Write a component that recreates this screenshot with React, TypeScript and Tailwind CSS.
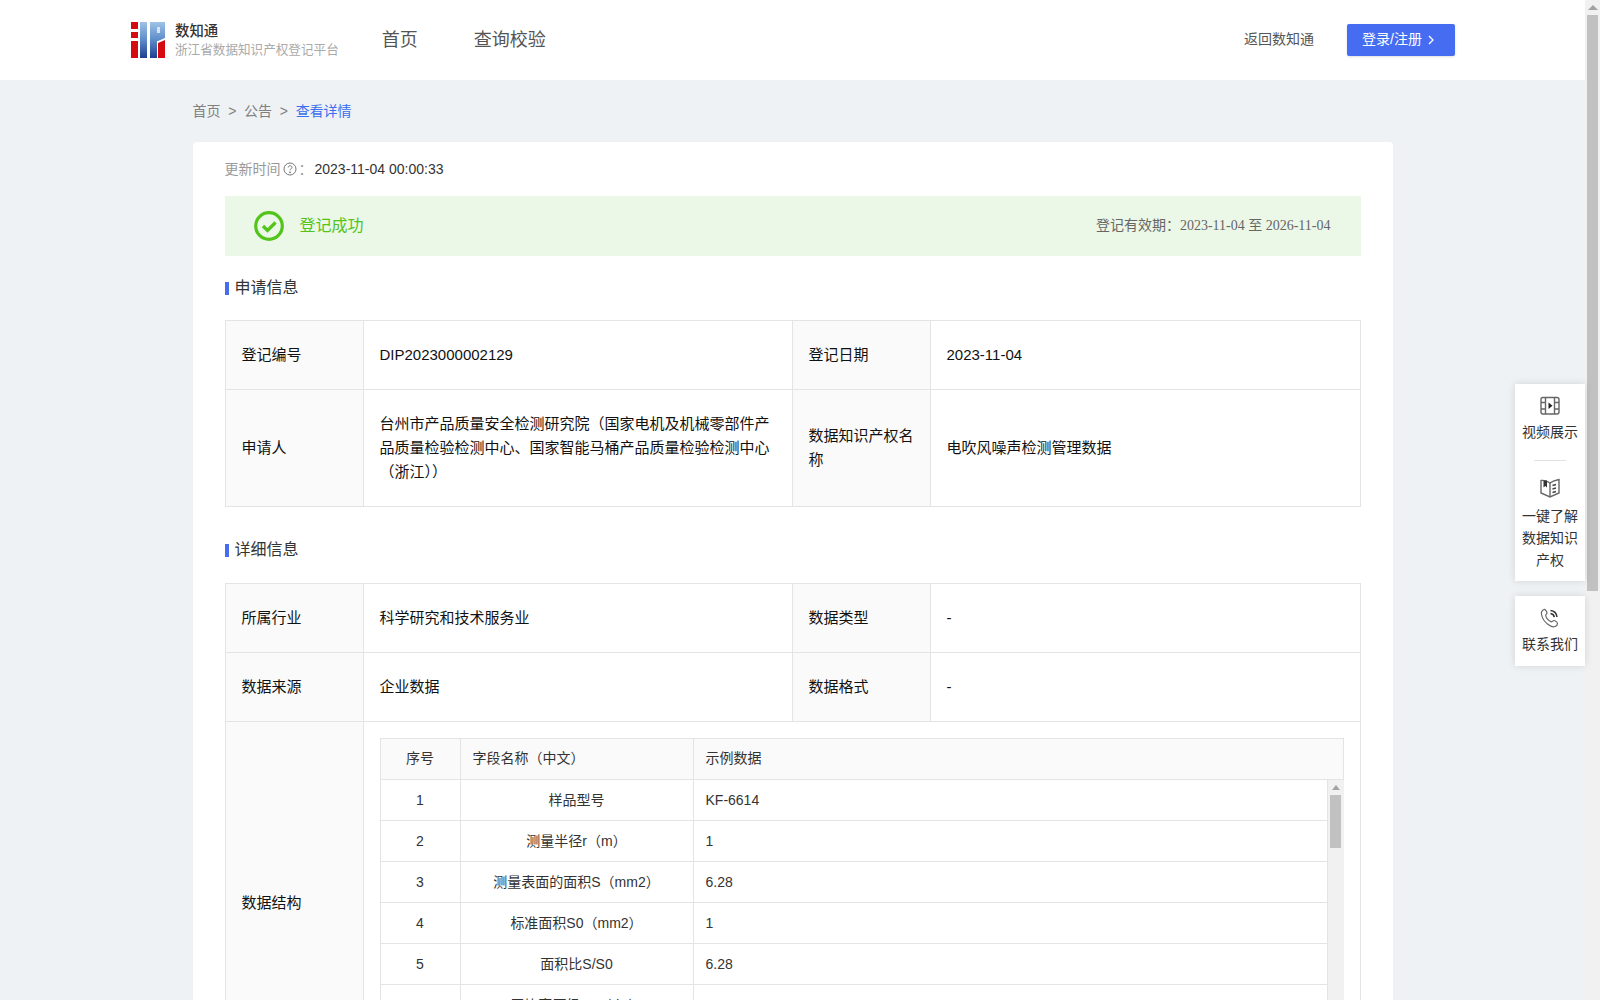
import React from 'react';

const FONT = "font-['Liberation_Sans','Noto_Sans_CJK_SC',sans-serif]";

const FIELD_ROWS = [
  { no: 1, name: '样品型号', sample: 'KF-6614' },
  { no: 2, name: '测量半径r（m）', sample: '1' },
  { no: 3, name: '测量表面的面积S（mm2）', sample: '6.28' },
  { no: 4, name: '标准面积S0（mm2）', sample: '1' },
  { no: 5, name: '面积比S/S0', sample: '6.28' },
  { no: 6, name: '平均声压级LP（dB）', sample: '46.8888' },
  { no: 7, name: '声功率级LW（dB）', sample: '54.8888' },
];

function Logo() {
  return (
    <svg width="34" height="36" viewBox="0 0 34 36" className="shrink-0">
      <defs>
        <linearGradient id="ipBlue" x1="0" y1="0" x2="0" y2="1">
          <stop offset="0" stopColor="#9fc2e8" />
          <stop offset="0.5" stopColor="#5c8cc9" />
          <stop offset="1" stopColor="#1f3f8f" />
        </linearGradient>
      </defs>
      <rect x="0" y="0" width="7" height="7" fill="#d40c12" />
      <rect x="0" y="10" width="7" height="6" fill="#d40c12" />
      <rect x="0" y="19" width="7" height="17" fill="#d40c12" />
      <rect x="9" y="0" width="7" height="36" fill="url(#ipBlue)" />
      <path d="M19 0h15v16l-7 3h-1v17h-7z" fill="url(#ipBlue)" />
      <rect x="26" y="5" width="3" height="6" fill="#d5e4f4" />
      <path d="M27 21l7-3v18h-7z" fill="#d40c12" />
    </svg>
  );
}

function VideoIcon() {
  return (
    <svg width="22" height="22" viewBox="0 0 22 22" fill="none" stroke="#666" strokeWidth="1.4">
      <rect x="2" y="2.5" width="18" height="16.5" rx="2" />
      <path d="M6.5 2.5V19M15.5 2.5V19M2 7.5h4.5M2 14h4.5M15.5 7.5H20M15.5 14H20" />
      <path d="M9.5 7.5l4 3.2-4 3.2z" fill="#222" stroke="none" />
    </svg>
  );
}

function BookIcon() {
  return (
    <svg width="22" height="22" viewBox="0 0 22 22" fill="none" stroke="#666" strokeWidth="1.4">
      <path d="M2 3.5c3-.5 6 .3 9 2.500 3-2.200 6-3 9-3.500V16l-9 4-9-4z" />
      <path d="M11 6v14" />
      <path d="M4.500 3.500h3.500v7L6.200 9l-1.700 1.500z" fill="#333" stroke="none" />
      <path d="M13.500 8.500l3.500-1M13.500 12l3.500-1M13.500 15.500l3.500-1" stroke="#444" />
    </svg>
  );
}

function PhoneIcon() {
  return (
    <svg width="22" height="22" viewBox="0 0 22 22" fill="none" stroke="#666" strokeWidth="1.2">
      <path d="M5 2.500c-2 1-3 2.500-2.500 5 .8 4 2.800 7 6 9.500 2.500 2 5.500 3.300 7.500 2.500 1.700-.7 2.500-2 2.500-3 0-1-2.500-3-3.500-3-1 0-1.500 1.500-2.500 1.300-2.500-.5-5.500-4-5.800-6.300-.1-1 1.300-1.500 1.300-2.500S6.200 2 5 2.500z" />
      <path d="M11.500 3.500c3.500.3 6 2.800 6.500 6.500M11.500 6.500c2 .2 3.500 1.700 3.800 3.700" stroke="#333" strokeWidth="1.5" />
    </svg>
  );
}

function SectionTitle({ title, className = '' }: { title: string; className?: string }) {
  return (
    <div className={`flex h-[64px] items-center ${className}`}>
      <span className="mr-[6px] h-[13px] w-[4px] bg-[#466df1]" />
      <span className="text-[16px] text-[#333]">{title}</span>
    </div>
  );
}

const labelCell = 'border border-[#e4e4e4] bg-[#fafafa] px-4 text-[15px] leading-6 text-[#111] font-normal text-left';
const valueCell = 'border border-[#e4e4e4] px-4 text-[15px] leading-6 text-[#111]';

function InfoCols() {
  return (
    <colgroup>
      <col className="w-[138px]" />
      <col className="w-[429px]" />
      <col className="w-[138px]" />
      <col />
    </colgroup>
  );
}

function FieldTable() {
  return (
    <div className="border border-[#e4e4e4] text-[14px] text-[#333]">
      <div className="grid h-[41px] grid-cols-[80px_233px_1fr] items-stretch border-b border-[#e4e4e4] bg-[#fafafa] leading-[38px]">
        <div className="border-r border-[#e4e4e4] text-center">序号</div>
        <div className="border-r border-[#e4e4e4] pl-3">字段名称（中文）</div>
        <div className="pl-3">示例数据</div>
      </div>
      <div className="flex">
        <div className="flex-1 border-r border-[#e4e4e4]">
          {FIELD_ROWS.map((row) => (
            <div key={row.no} className="grid h-[41px] grid-cols-[80px_233px_1fr] border-b border-[#e4e4e4] leading-[40px] last:border-b-0">
              <div className="border-r border-[#e4e4e4] text-center">{row.no}</div>
              <div className="border-r border-[#e4e4e4] text-center">{row.name}</div>
              <div className="pl-3">{row.sample}</div>
            </div>
          ))}
        </div>
        <div className="-mr-px w-[16px] shrink-0 bg-[#f1f1f1] pt-[5px]">
          <div className="mx-auto h-0 w-0 border-x-[4px] border-b-[5px] border-x-transparent border-b-[#a3a3a3]" />
          <div className="mx-auto mt-[5px] h-[53px] w-[11px] bg-[#c1c1c1]" />
        </div>
      </div>
    </div>
  );
}

export default function App() {
  return (
    <div className={`relative flex h-screen overflow-hidden bg-[#eef2f5] ${FONT}`}>
      <div className="min-w-0 flex-1">
        <header className="flex h-[80px] items-center bg-white pl-[131px] pr-[130px]">
          <Logo />
          <div className="ml-[10px]">
            <div className="text-[14.4px] leading-[20px] font-medium text-[#333]">数知通</div>
            <div className="text-[12.6px] leading-[19px] text-[#aaa]">浙江省数据知识产权登记平台</div>
          </div>
          <nav className="ml-[43px] flex gap-[56px] text-[18px] text-[#555]">
            <span>首页</span>
            <span>查询校验</span>
          </nav>
          <div className="ml-auto flex items-center gap-[33px]">
            <span className="pb-[1px] text-[14px] text-[#555]">返回数知通</span>
            <button className="flex h-[32px] w-[108px] items-center gap-[6px] rounded-[2px] bg-[#466df1] pb-[1px] pl-[15px] text-[14px] text-white shadow-sm">
              登录/注册
              <svg width="6" height="10" viewBox="0 0 6 10" fill="none" stroke="#fff" strokeWidth="1.3">
                <path d="M1 1l4 4-4 4" />
              </svg>
            </button>
          </div>
        </header>

        <main className="mx-auto w-[1200px]">
          <div className="flex h-[62px] items-center gap-[7.7px] text-[14px] text-[#808080]">
            <span>首页</span>
            <span>&gt;</span>
            <span>公告</span>
            <span>&gt;</span>
            <span className="text-[#3a6ff0]">查看详情</span>
          </div>

          <section className="rounded-t-[4px] bg-white px-8">
            <div className="flex h-[54px] items-center text-[14px]">
              <span className="text-[#999]">更新时间</span>
              <svg width="14" height="14" viewBox="0 0 14 14" fill="none" stroke="#777" className="ml-[2px]">
                <circle cx="7" cy="7" r="6" />
                <path d="M5.200 5.500c0-2.300 3.800-2.300 3.800 0 0 1.300-2 1.400-2 2.800" />
                <circle cx="7" cy="10.300" r=".5" fill="#777" />
              </svg>
              <span className="ml-[2px] mr-[2px] text-[#999]">：</span>
              <span className="text-[#333]">2023-11-04 00:00:33</span>
            </div>

            <div className="flex h-[60px] items-center bg-[#ebf7e7] pl-[29px] pr-[30px]">
              <svg width="30" height="30" viewBox="0 0 30 30" fill="none" stroke="#52c41a">
                <circle cx="15" cy="15" r="13.300" strokeWidth="3.200" />
                <path d="M9 15l4.500 4.500L21.500 11.500" strokeWidth="3.200" />
              </svg>
              <span className="ml-[16px] pb-[1px] text-[16px] text-[#52c41a]">登记成功</span>
              <span className="ml-auto pb-[2px] text-[14px] text-[#666]">
                登记有效期：<span className="font-['Liberation_Serif','Noto_Sans_CJK_SC',serif]">2023-11-04 至 2026-11-04</span>
              </span>
            </div>

            <SectionTitle title="申请信息" />
            <table className="w-full table-fixed border-collapse">
              <InfoCols />
              <tbody>
                <tr className="h-[69px]">
                  <th className={labelCell}>登记编号</th>
                  <td className={valueCell}>DIP2023000002129</td>
                  <th className={labelCell}>登记日期</th>
                  <td className={valueCell}>2023-11-04</td>
                </tr>
                <tr className="h-[117px]">
                  <th className={labelCell}>申请人</th>
                  <td className={valueCell}>台州市产品质量安全检测研究院（国家电机及机械零部件产品质量检验检测中心、国家智能马桶产品质量检验检测中心（浙江））</td>
                  <th className={labelCell}>数据知识产权名称</th>
                  <td className={valueCell}>电吹风噪声检测管理数据</td>
                </tr>
              </tbody>
            </table>

            <SectionTitle title="详细信息" className="mb-[1px] mt-[11px]" />
            <table className="w-full table-fixed border-collapse">
              <InfoCols />
              <tbody>
                <tr className="h-[69px]">
                  <th className={labelCell}>所属行业</th>
                  <td className={valueCell}>科学研究和技术服务业</td>
                  <th className={labelCell}>数据类型</th>
                  <td className={valueCell}>-</td>
                </tr>
                <tr className="h-[69px]">
                  <th className={labelCell}>数据来源</th>
                  <td className={valueCell}>企业数据</td>
                  <th className={labelCell}>数据格式</th>
                  <td className={valueCell}>-</td>
                </tr>
                <tr>
                  <th className={labelCell}>数据结构</th>
                  <td colSpan={3} className="border border-[#e4e4e4] p-4">
                    <FieldTable />
                  </td>
                </tr>
              </tbody>
            </table>
          </section>
        </main>
      </div>

      {/* browser scrollbar */}
      <div className="w-[15px] shrink-0 bg-[#f1f1f1] pt-[5px]">
        <div className="mx-auto h-0 w-0 border-x-[5px] border-b-[5px] border-x-transparent border-b-[#a3a3a3]" />
        <div className="mx-auto mt-[5px] h-[576px] w-[11px] bg-[#c1c1c1]" />
      </div>

      {/* floating side tools */}
      <aside className="absolute right-[15px] top-[384px] w-[70px] text-center text-[14px] leading-[22px] text-[#333]">
        <div className="bg-white pb-[10px] pt-[11px] shadow-[0_0_8px_rgba(0,0,0,0.12)]">
          <div className="flex justify-center"><VideoIcon /></div>
          <div className="mt-[4px]">视频展示</div>
          <div className="mx-auto mt-[17px] h-px w-[32px] bg-[#e2e2e2]" />
          <div className="mt-[16px] flex justify-center"><BookIcon /></div>
          <div className="mt-[6px]">一键了解<br />数据知识<br />产权</div>
        </div>
        <div className="mt-[15px] bg-white pb-[11px] pt-[11px] shadow-[0_0_8px_rgba(0,0,0,0.12)]">
          <div className="flex justify-center"><PhoneIcon /></div>
          <div className="mt-[4px]">联系我们</div>
        </div>
      </aside>
    </div>
  );
}
